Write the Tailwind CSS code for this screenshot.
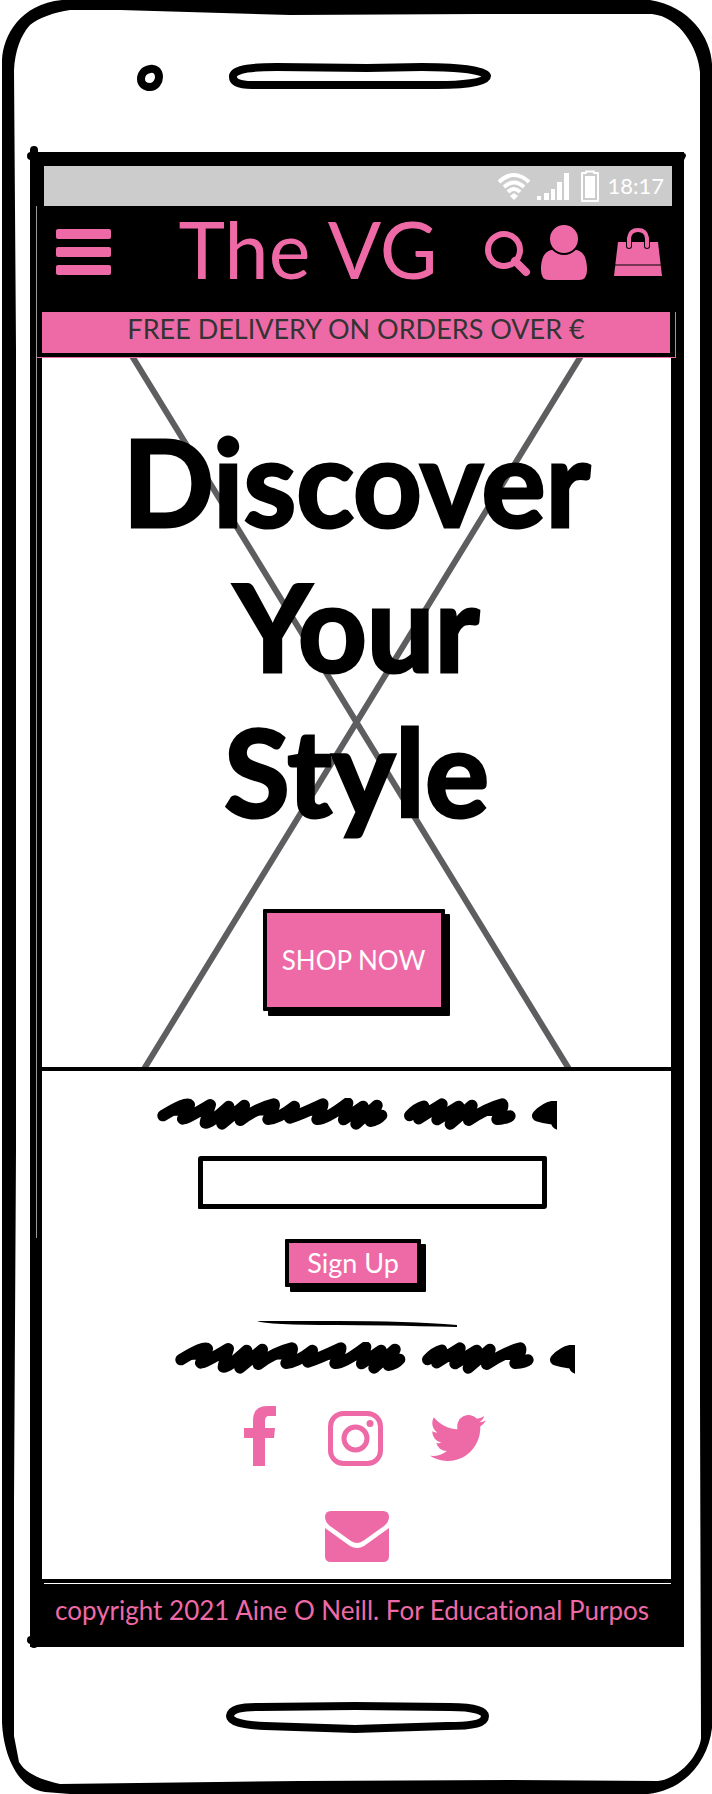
<!DOCTYPE html>
<html lang="en">
<head>
<meta charset="utf-8">
<meta name="viewport" content="width=device-width, initial-scale=1">
<title>The VG</title>
<script src="https://cdn.jsdelivr.net/npm/@tailwindcss/browser@4"></script>
</head>
<body class="bg-white font-['Lato','Open_Sans',sans-serif] text-black">
<div class="relative flex min-h-screen flex-col overflow-hidden pr-7 pl-[30px]">

  <!-- Phone top: camera and speaker -->
  <div class="flex h-[152px] items-start gap-[60px] pt-[61px] pl-[105px]">
    <svg class="h-8 w-8 shrink-0" viewBox="0 0 32 32" fill="none" stroke="#000" stroke-width="8"><path d="M15 8C9 9 6 13 6 18C6 23 10 26 15 26C21 26 24 20 24 16C24 10 20 7 15 8Z"/></svg>
    <svg class="h-8 w-[264px] shrink-0" viewBox="0 0 264 32" fill="none" stroke="#000" stroke-width="8"><path d="M6 16C5 7 30 6 50 6L140 7L195 6C220 6 258 8 260 15C260 22 232 24 210 24L25 24C12 24 6 21 6 16Z"/></svg>
  </div>

  <!-- Screen -->
  <div class="bg-black pt-3.5 pr-[13px] pl-3">
    <div class="mr-[-1px] ml-0.5 flex h-10 items-center justify-end bg-[#ccc] pr-2 text-white">
      <svg class="mr-1.5 h-8 w-[34px]" viewBox="0 0 34 32" fill="none" stroke="#fff" stroke-width="4"><path d="M2 12Q17-2 32 12"/><path d="M7 17Q17 8 27 17"/><path d="M11 22Q17 16 23 22"/><path d="M17 23L21 26L17 30L13 26Z" fill="#fff" stroke="none"/></svg>
      <svg class="mr-3 h-8 w-8" viewBox="0 0 32 32" fill="#fff"><path d="M0 26h4v4H0zM7 23h5v7H7zM14 19h4v11h-4zM20 12h5v18h-5zM27 3h5v27h-5z"/></svg>
      <svg class="mr-2 h-8 w-[18px]" viewBox="0 0 18 32" fill="none" stroke="#fff" stroke-width="2"><path d="M1 3H5V1.500H13V3H17V31H1Z" stroke-linejoin="round"/><path d="M4 6H14V28H4Z" fill="#fff" stroke="none"/></svg>
      <span class="text-[22px] leading-8">18:17</span>
    </div>

    <header class="flex h-[106px] items-start pr-[9px] pl-3.5 text-[#ee6aa7]">
      <button aria-label="Menu" class="mt-[22px]">
        <svg class="h-[48px] w-[55px]" viewBox="0 0 55 48" fill="currentColor"><rect y="1" width="55" height="10" rx="2"/><rect y="19" width="55" height="10" rx="2"/><rect y="37" width="55" height="10" rx="2"/></svg>
      </button>
      <a href="#" class="grow pl-5 text-center text-[79px] leading-[86px]">The VG</a>
      <button aria-label="Search" class="mt-[24px] mr-2.5">
        <svg class="h-12 w-[46px]" viewBox="0 0 46 48" fill="none" stroke="currentColor"><circle cx="19" cy="20" r="16" stroke-width="6"/><path d="M30 31L41 42" stroke-width="8" stroke-linecap="round"/></svg>
      </button>
      <button aria-label="Account" class="mt-[18px] mr-[27px]">
        <svg class="h-14 w-[46px]" viewBox="0 0 46 56" fill="currentColor"><path d="M10 26C2 28 0 37 0 46Q0 56 8 56H38Q46 56 46 46C46 37 44 28 36 26Q31 25 29 28Q23 31 17 28Q15 25 10 26Z"/><circle cx="23" cy="15" r="15" stroke="#000" stroke-width="2"/></svg>
      </button>
      <button aria-label="Bag" class="mt-[21px]">
        <svg class="h-[50px] w-12" viewBox="0 0 48 50" fill="none"><path d="M4 15H44L48 49H0Z" fill="#ee6aa7"/><path d="M1 38H47" stroke="#000"/><path d="M15 19V11Q16 3 24 3Q32 3 33 11V19" stroke="#000" stroke-width="6" stroke-linecap="round"/><path d="M15 19V11Q16 3 24 3Q32 3 33 11V19" stroke="#ee6aa7" stroke-width="4" stroke-linecap="round"/></svg>
      </button>
    </header>

    <div class="-mr-[5px] -ml-1.5 border-x border-b border-[#ee6aa7]">
      <p class="h-[45px] overflow-hidden border-x-[5px] border-b-4 border-black bg-[#ee6aa7] text-center text-[27px] leading-[34px] whitespace-nowrap text-[#333]">FREE DELIVERY ON ORDERS OVER €</p>
    </div>

    <!-- Hero -->
    <section class="relative flex flex-col items-center border-b-4 border-black bg-white pt-[51px] pb-14">
      <svg class="absolute inset-0 h-full w-full" viewBox="0 0 629 709" preserveAspectRatio="none" stroke="#5e5e60" stroke-width="6" aria-hidden="true"><path d="M90-2L527 711M539-2L102 711"/></svg>
      <h1 class="relative w-[500px] text-center text-[120px] leading-[145px] font-bold [-webkit-text-stroke:3px_#000]">Discover Your Style</h1>
      <button class="relative mt-[65px] mr-[6px] h-[102px] w-[182px] rounded-[1px] border-4 border-black bg-[#ee6aa7] text-[26px] text-white shadow-[5px_5px_0_#000]">SHOP NOW</button>
    </section>

    <!-- Newsletter and social links -->
    <section class="flex flex-col items-center border-b-4 border-black bg-white pt-[27px] pb-4">
      <svg class="h-8 w-[400px]" viewBox="0 0 1200 96" role="img" aria-label="Newsletter heading">
        <defs>
          <g id="scribble" fill="#000" stroke="#000" stroke-width="34" stroke-linecap="round" stroke-linejoin="round">
            <path d="M18 53Q88 10 97 20Q80 55 77 63Q85 65 160 20Q146 65 145 75Q155 80 215 25L195 78L262 22L250 67Q300 30 350 18Q358 20 333 64Q365 62 412 25L398 60Q430 50 498 18Q500 20 480 64Q505 66 572 15L560 65L618 25L597 78L660 22L640 70Q660 68 674 52"/>
            <path d="M758 53Q780 30 800 25Q805 35 785 62L855 18L840 65L905 25L880 78L945 22L935 67Q990 30 1036 18Q1042 25 1020 64Q1050 62 1059 54"/>
            <path d="M1142 53Q1165 30 1186 26H1220V86L1200 76Q1195 62 1182 62Q1160 58 1142 53Z"/>
          </g>
        </defs>
        <use href="#scribble"/>
      </svg>
      <input type="text" aria-label="Email address" class="mt-[26px] ml-8 h-[53px] w-[349px] rounded-[3px_2px_3px_1px] border-[5px] border-black bg-white px-3 text-2xl">
      <button class="mt-[30px] mr-[7px] h-12 w-[136px] rounded-[1px] border-4 border-black bg-[#ee6aa7] text-[27px] leading-8 text-white shadow-[5px_5px_0_#000]">Sign Up</button>
      <svg class="mt-[33px] h-2 w-[200px]" viewBox="0 0 200 8" aria-hidden="true"><path d="M0 1L80 1Q150 1 200 5V7Q120 5 80 5Q10 5 0 1Z"/></svg>
      <svg class="mt-[14px] ml-9 h-8 w-[400px]" viewBox="0 0 1200 96" role="img" aria-label="Social heading"><use href="#scribble"/></svg>
      <nav aria-label="Social" class="mt-8 flex w-[280px] flex-wrap justify-center gap-y-[45px] text-[#ee6aa7]">
        <a href="#" aria-label="Facebook" class="mr-[52px] ml-4"><svg class="h-[60px] w-8" viewBox="0 0 32 60" fill="currentColor"><path d="M9 60V32H0V22H9V15Q9 0 23 0H32V10H25Q21 10 21 15V22H31L30 32H21V60Z"/></svg></a>
        <a href="#" aria-label="Instagram" class="mt-[5px] mr-[47px]"><svg class="h-[55px] w-[55px]" viewBox="0 0 55 55" fill="none" stroke="currentColor" stroke-width="5"><rect x="2.500" y="2.500" width="50" height="50" rx="13"/><circle cx="27.500" cy="27.500" r="11.500"/><circle cx="42" cy="12.500" r="3.500" fill="currentColor" stroke="none"/></svg></a>
        <a href="#" aria-label="Twitter" class="mt-[9px]"><svg class="h-[46px] w-14" viewBox="0 2.250 24 19.500" preserveAspectRatio="none" fill="currentColor"><path d="M23.953 4.570a10 10 0 01-2.825.775 4.958 4.958 0 002.163-2.723c-.951.555-2.005.959-3.127 1.184a4.920 4.920 0 00-8.384 4.482C7.690 8.095 4.067 6.130 1.640 3.162a4.822 4.822 0 00-.666 2.475c0 1.710.870 3.213 2.188 4.096a4.904 4.904 0 01-2.228-.616v.060a4.923 4.923 0 003.946 4.827 4.996 4.996 0 01-2.212.085 4.936 4.936 0 004.604 3.417 9.867 9.867 0 01-6.102 2.105c-.390 0-.779-.023-1.170-.067a13.995 13.995 0 007.557 2.209c9.053 0 13.998-7.496 13.998-13.985 0-.210 0-.420-.015-.630A9.935 9.935 0 0024 4.590z"/></svg></a>
        <a href="#" aria-label="Email"><svg class="h-[52px] w-16" viewBox="0 0 64 52" fill="currentColor"><path d="M6 0H58Q64 0 64 6Q64 11 59 15L38 30Q32 34 26 30L5 15Q0 11 0 6Q0 0 6 0Z"/><path d="M0 17L25 35Q32 39 39 35L64 17V45Q64 51 58 51H6Q0 51 0 45Z"/></svg></a>
      </nav>
    </section>
    <footer class="ml-0.5 h-16 overflow-hidden border-t border-white bg-black pl-[11px] text-[26px] leading-[52px] whitespace-nowrap text-[#ee6aa7] [font-variant-ligatures:none]">copyright 2021 Aine O Neill. For Educational Purpos</footer>
  </div>

  <!-- Phone bottom -->
  <div class="flex h-[147px] justify-center pt-[54px]">
    <svg class="h-8 w-[264px]" viewBox="0 0 264 32" fill="none" stroke="#000" stroke-width="8"><path d="M5 15C6 8 15 6 35 6L130 5L225 6C250 6 260 10 260 15C260 22 250 25 222 25L130 28L40 25C18 24 5 21 5 15Z"/></svg>
  </div>

  <!-- Hand-drawn outline of the handset -->
  <svg class="pointer-events-none absolute inset-0 h-full w-full" viewBox="0 0 712 1794" preserveAspectRatio="none" aria-hidden="true">
    <path fill-rule="evenodd" d="M62 0L650 0C690 6 711 38 712 64V1728C708 1762 684 1790 648 1794H70L45 1792C15 1788 3 1750 2 1722V60C3 36 20 4 62 0ZM70 10C55 12 38 18 30 25C20 36 15 52 14 70L16 350V1150L14 1500V1736L19 1762C26 1774 42 1780 60 1784L300 1781L510 1780L658 1781C682 1778 700 1752 701 1738L700 1400V72C698 48 680 17 652 14H480L290 15L120 10Z"/>
    <path d="M30 165V150A4 4 0 0 1 38 150V153H680Q686 152 686 156L684 160V165Z"/>
    <circle cx="31" cy="156" r="4"/><circle cx="31" cy="1640" r="4"/><circle cx="34" cy="1644" r="4"/>
    <path d="M36.500 206V1238" stroke="#999" stroke-width="1"/>
  </svg>
</div>
</body>
</html>
